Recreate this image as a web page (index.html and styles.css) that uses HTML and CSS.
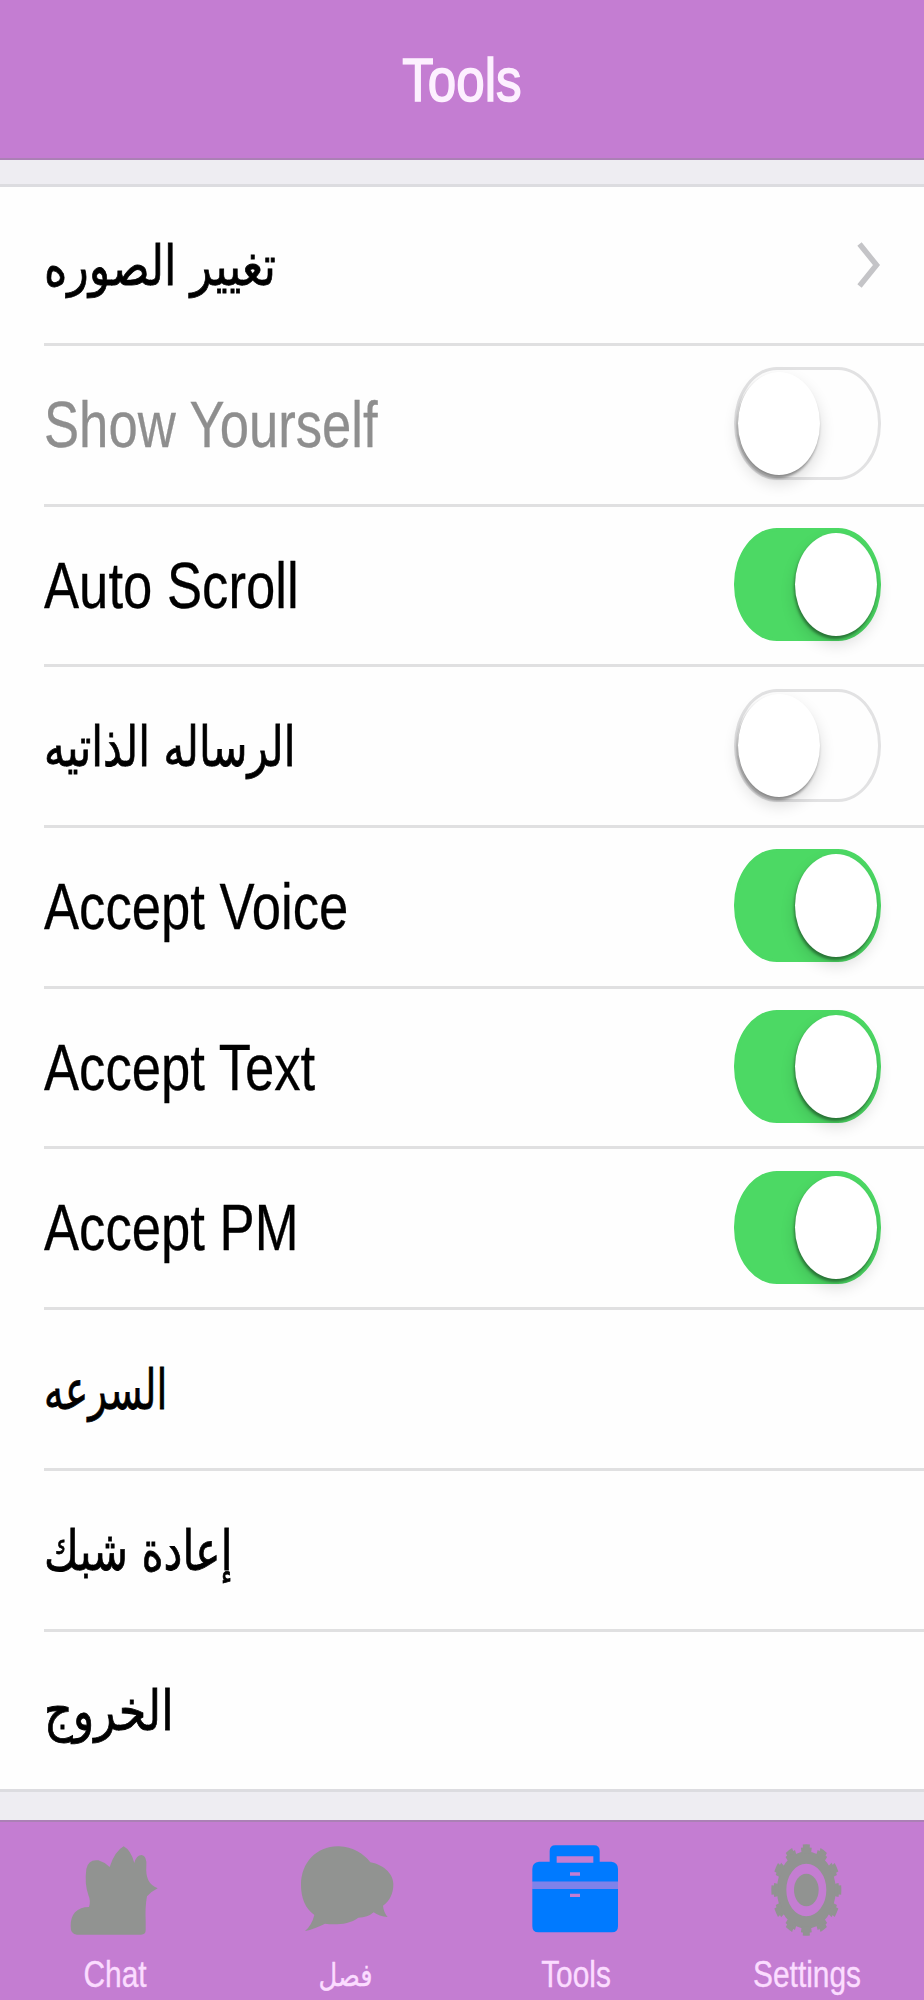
FILE: index.html
```
<!DOCTYPE html>
<html lang="en">

<head>
    <meta charset="UTF-8">
    <meta name="viewport" content="width=device-width, initial-scale=1.0">
    <title>Tools</title>
    <link rel="stylesheet" href="styles.css">
</head>

<body>
    <header class="navbar">
        <h1>Tools</h1>
    </header>

    <main class="content">
        <ul class="list">
            <li class="row">
                <span class="label arabic wide" lang="ar">تغيير الصوره</span>
                <svg class="chevron" viewBox="0 0 24 46">
                    <path d="M2.5 2 L19.5 23 L2.5 44" />
                </svg>
            </li>
            <li class="row disabled">
                <span class="label">Show Yourself</span>
                <span class="switch"><span class="knob"></span></span>
            </li>
            <li class="row">
                <span class="label">Auto Scroll</span>
                <span class="switch on"><span class="knob"></span></span>
            </li>
            <li class="row">
                <span class="label arabic" lang="ar">الرساله الذاتيه</span>
                <span class="switch"><span class="knob"></span></span>
            </li>
            <li class="row">
                <span class="label">Accept Voice</span>
                <span class="switch on"><span class="knob"></span></span>
            </li>
            <li class="row">
                <span class="label">Accept Text</span>
                <span class="switch on"><span class="knob"></span></span>
            </li>
            <li class="row">
                <span class="label">Accept PM</span>
                <span class="switch on"><span class="knob"></span></span>
            </li>
            <li class="row">
                <span class="label arabic narrow" lang="ar">السرعه</span>
            </li>
            <li class="row">
                <span class="label arabic" lang="ar">إعادة شبك</span>
            </li>
            <li class="row">
                <span class="label arabic wide" lang="ar">الخروج</span>
            </li>
        </ul>
    </main>

    <nav class="tabbar">
        <a class="tab">
            <svg class="icon" viewBox="196 170 300 300">
                <path d="M232 463 Q212 462 213 438 Q212 412 226 396 Q242 380 268 380 Q274 362 266 344 Q254 310 260 266 Q266 236 296 240 Q316 246 330 260 Q346 212 372 198 Q394 210 404 248 Q410 224 426 224 Q442 226 440 258 Q438 282 446 300 Q454 316 474 324 Q454 334 442 348 Q436 380 438 420 L438 450 Q438 463 424 463 Z" />
            </svg>
            <span>Chat</span>
        </a>
        <a class="tab">
            <svg class="icon" viewBox="889 170 300 300">
                <path d="M1018 198 C1060 200 1092 220 1112 246 C1148 252 1180 278 1181 310 C1182 340 1168 364 1150 376 Q1152 396 1164 410 Q1138 408 1122 396 Q1104 412 1076 412 C1048 434 1002 434 976 430 Q944 446 916 452 Q936 436 944 404 C916 384 904 352 904 314 C904 246 952 196 1018 198 Z" />
            </svg>
            <span class="arabic" lang="ar">فصل</span>
        </a>
        <a class="tab active">
            <svg class="icon" viewBox="196 170 300 300">
                <path fill-rule="evenodd" d="M267 244 V212 Q267 195 284 195 H400 Q417 195 417 212 V244 H452 Q472 246 472 266 V304 H215 V266 Q215 246 235 244 Z M288 228 V247 H398 V228 Z M328 276 V286 H358 V276 Z" />
                <path fill-rule="evenodd" d="M215 325 H472 V438 Q472 456 454 456 H233 Q215 456 215 438 Z M328 340 V350 H358 V340 Z" />
                <path class="seam" d="M215 304 H472 V325 H215 Z" />
            </svg>
            <span>Tools</span>
        </a>
        <a class="tab">
            <svg class="icon" viewBox="889 170 300 300">
                <g class="gear" transform="translate(1037 329) scale(1 1.31)">
                    <circle class="rim" r="74" />
                    <circle class="teeth" r="91" pathLength="120" />
                    <circle class="tips" r="99" pathLength="120" />
                    <circle class="hub" r="37" />
                </g>
            </svg>
            <span>Settings</span>
        </a>
    </nav>
</body>

</html>
```
FILE: styles.css
```
* {
    box-sizing: border-box;
}

body {
    margin: 0;
    height: 2000px;
    display: flex;
    flex-direction: column;
    overflow: hidden;
    background: #eeedf2;
    font-family: "Liberation Sans", Arial, sans-serif;
}

.navbar {
    height: 160px;
    flex: none;
    background: #c47dd2;
    border-bottom: 2px solid #ab80b5;
    text-align: center;
}

.navbar h1 {
    margin: 0;
    padding-top: 42px;
    font-size: 62px;
    line-height: 75px;
    font-weight: normal;
    color: #fdf0ff;
    -webkit-text-stroke: 1.6px #fdf0ff;
    transform: scaleX(0.825);
}

.content {
    flex: 1;
    padding-top: 24px;
}

.list {
    margin: 0;
    padding: 0;
    list-style: none;
    background: #fefefe;
    border-top: 3px solid #dcdce0;
    border-bottom: 3px solid #dcdce0;
}

.row {
    height: 160.7px;
    margin-left: 44px;
    padding-right: 43px;
    display: flex;
    align-items: center;
    justify-content: space-between;
    border-bottom: 3px solid #e0e0e1;
}

.row:first-child {
    height: 159px;
}

.row:last-child {
    height: 157.7px;
    border-bottom: none;
}

/* condensed lettering */
.label {
    font-size: 65px;
    line-height: 78px;
    white-space: nowrap;
    color: #000;
    -webkit-text-stroke: 0.3px currentColor;
    transform: scaleX(0.81);
    transform-origin: left center;
}

.label.arabic {
    padding-top: 2px;
    font-family: "DejaVu Sans", sans-serif;
    font-size: 55px;
    -webkit-text-stroke: 0.8px currentColor;
    transform: scaleX(0.77);
}

.label.arabic.wide {
    transform: scaleX(0.81);
}

.label.arabic.narrow {
    transform: scaleX(0.71);
}

.disabled .label {
    color: #8e8e8e;
}

.chevron {
    width: 24px;
    height: 46px;
    fill: none;
    stroke: #c4c4c7;
    stroke-width: 5.5;
}

/* switches */
.switch {
    flex: none;
    display: flex;
    width: 147px;
    height: 113px;
    margin-bottom: 2px;
    padding: 2px 1px;
    border: 3px solid #e2e2e3;
    border-radius: 43px / 56px;
    background: #fefefe;
}

.knob {
    width: 82px;
    height: 103px;
    border-radius: 50%;
    background: #fff;
    box-shadow: -1px 3px 3px rgba(0, 0, 0, 0.4), 0 8px 16px rgba(0, 0, 0, 0.14);
}

.switch.on {
    justify-content: flex-end;
    border-color: #4cd964;
    background: #4cd964;
}

/* bottom tabs */
.tabbar {
    height: 180px;
    flex: none;
    display: flex;
    padding-right: 2px;
    background: #c47dd2;
    border-top: 2px solid #ab80b5;
}

.tab {
    flex: 1;
    padding-top: 15px;
    display: flex;
    flex-direction: column;
    align-items: center;
    gap: 16px;
}

.tab span {
    font-size: 36px;
    line-height: 44px;
    color: #fbdcff;
    -webkit-text-stroke: 0.4px currentColor;
    transform: scaleX(0.83);
}

.tab .arabic {
    font-family: "DejaVu Sans", sans-serif;
    font-size: 31px;
}

.icon {
    width: 100px;
    height: 100px;
    fill: #919391;
}

.active .icon {
    fill: #007aff;
}

.icon .seam {
    fill: #7f82ea;
}

.gear circle {
    fill: none;
    stroke: #919391;
}

.gear .rim {
    stroke-width: 28;
}

.gear .teeth {
    stroke-width: 14;
    stroke-dasharray: 6.4 3.6;
    stroke-dashoffset: 3.2;
}

.gear .tips {
    stroke-width: 12;
    stroke-dasharray: 4 6;
    stroke-dashoffset: 2;
}

.gear .hub {
    fill: #919391;
    stroke: none;
}
```
